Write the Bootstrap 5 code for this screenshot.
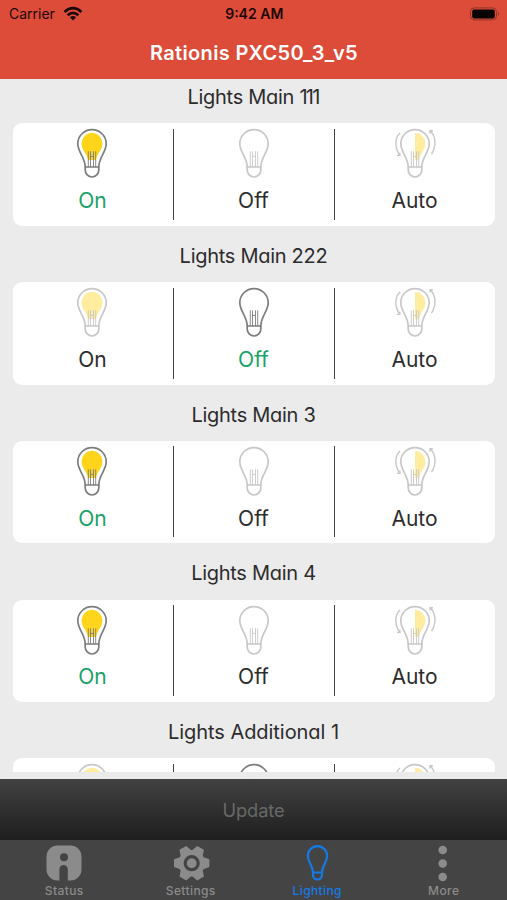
<!DOCTYPE html>
<html lang="en">
<head>
<meta charset="utf-8">
<meta name="viewport" content="width=device-width, initial-scale=1">
<title>Rationis PXC50_3_v5</title>
<link href="https://cdn.jsdelivr.net/npm/bootstrap@5.3.0/dist/css/bootstrap.min.css" rel="stylesheet">
<style>
body{font-family:Inter,"Liberation Sans",sans-serif;background:#ebebeb;color:#2c2c2c}
.top-area{background:#dd4c39;height:79px;flex:none}
.status-bar{height:27px;font-size:14px;line-height:27px;color:#1b0805;padding:0 7.5px 0 9px}
.page-title{font-size:20px;line-height:30px;margin-top:10.5px;padding-left:1px;font-weight:600;letter-spacing:.33px}
.light-list{height:693px;flex:none}
.light-name{height:36px;line-height:36px;font-size:20px;font-feature-settings:"cv11";margin-bottom:8.3px;font-weight:400;letter-spacing:-.28px}
.light-name.spaced{letter-spacing:-.05px}
.ones{letter-spacing:-1.8px;margin-right:1px}
.light-card{height:102.5px;border-radius:9px;margin:0 12.5px 12px;padding-top:5.5px;flex:none}
.choice{height:91px;border:0;background:none;color:inherit;padding:0;font-size:21px;line-height:26px;font-feature-settings:"cv11"}
.choice+.choice{border-left:1.3px solid #444}
.choice.picked{color:#17a266}
.choice svg{margin:-.6px 0 9.8px;opacity:.42;flex:none}
.choice:first-child svg{margin-right:1.4px}
.choice.picked svg{opacity:1}
.update-bar{height:61px;margin-top:7px;flex:none;background:linear-gradient(#424242,#1e1e1e);color:#686868;font-size:18.3px;line-height:27px;padding:1px 0 0;letter-spacing:-.1px;border:0}
.tab-bar{height:60px;flex:none;background:#444;font-size:12px;font-weight:500;letter-spacing:.4px;line-height:14px;color:#8b8b8b;padding-left:1px}
.tab-bar a{color:inherit;padding-top:5px}
.tab-bar a.current{color:#147be4}
.tab-bar svg{display:block;margin:0 auto 2px}
</style>
<script src="https://cdn.jsdelivr.net/npm/bootstrap@5.3.0/dist/js/bootstrap.bundle.min.js"></script>
</head>
<body class="vh-100 overflow-hidden d-flex flex-column">
<svg width="0" height="0" class="position-absolute" aria-hidden="true">
<defs>
<g id="bulb" fill="none" stroke="#7d7d7d" stroke-width="1.7" stroke-linejoin="round">
<path d="M17.2 39C17.2 29 9.8 24.5 9.8 15.8A14.2 14.2 0 0 1 38.2 15.8C38.2 24.5 30.800 29 30.800 39Z"/>
<path d="M17.2 39v3a6.8 7 0 0 0 13.6 0v-3"/>
<path stroke-width=".9" d="M20.300 39V23.300M22.500 23.300V39M25.500 39V23.300M27.700 23.300V39M22.500 28.400h3"/>
</g>
<path id="glow" fill="#ffd51c" d="M24 4.8A10.5 10.5 0 0 1 34.5 15.3C34.5 22 29.5 25 27.8 32H20.2C18.500 25 13.500 22 13.500 15.3A10.5 10.5 0 0 1 24 4.8Z"/>
<path id="half-glow" fill="#ffd51c" d="M24 4.8A10.5 10.5 0 0 1 34.5 15.3C34.5 22 29.5 25 27.8 32H24Z"/>
<g id="turns" fill="none" stroke="#7d7d7d" stroke-width="1.400">
<path d="M9 5C3.500 10 3.500 20 8.800 27.200M6 27.400h2.900V24.700M39.300 2.800c6 6 6 16 1.200 23.200M39 5.400V2.700h2.900"/>
</g>
</defs>
</svg>

<header class="top-area">
<div class="status-bar row g-0">
<div class="col d-flex align-items-center"><span>Carrier</span>
<svg class="ms-2" width="20" height="16" viewBox="0 0 20 16"><g fill="none" stroke="#1b0805" stroke-width="2.700"><path d="M1.500 5.900Q10 -1.500 18.500 5.900"/><path d="M4.600 9.200Q10 4.500 15.400 9.200"/></g><path fill="#1b0805" d="M6.900 11.300Q10 8.700 13.100 11.300L10 14.500Z"/></svg></div>
<div class="col-auto fw-semibold">9:42 AM</div>
<div class="col d-flex align-items-center justify-content-end"><svg width="32" height="14" viewBox="0 0 32 14"><rect x="2.500" y=".9" width="26" height="12" rx="3.800" fill="none" stroke="#8c3427"/><rect x="4.200" y="2.600" width="22.600" height="8.800" rx="2" fill="#080201"/><path d="M30 4.700q2 2.200 0 4.400z" fill="#8c3427"/></svg></div>
</div>
<h1 class="page-title text-white text-center mb-0">Rationis PXC50_3_v5</h1>
</header>

<main class="light-list overflow-hidden" id="lights"></main>

<button class="update-bar w-100">Update</button>
<nav class="tab-bar row g-0 text-center">
<a class="col text-decoration-none" href="#"><svg width="38" height="37" viewBox="0 0 38 37"><path fill="currentColor" fill-rule="evenodd" d="M12.500 .5h13a11 11 0 0 1 11 11v13a11 11 0 0 1-11 11h-2.700V24.300a4.200 4.200 0 0 0-8.400 0v11.200H12.500a11 11 0 0 1-11-11v-13a11 11 0 0 1 11-11ZM19 8.300a4 4 0 1 0 0 8 4 4 0 0 0 0-8Z"/></svg>Status</a>
<a class="col text-decoration-none" href="#"><svg width="38" height="37" viewBox="0 0 38 37"><g transform="translate(19.700 18.200)"><g fill="currentColor"><circle r="13.200"/><path id="tooth" d="M-6.200 -11L-3.900 -17.700H3.900L6.200 -11Z" transform="rotate(30)"/><use href="#tooth" transform="rotate(60)"/><use href="#tooth" transform="rotate(120)"/><use href="#tooth" transform="rotate(180)"/><use href="#tooth" transform="rotate(240)"/><use href="#tooth" transform="rotate(300)"/></g><circle r="6.500" fill="none" stroke="#444" stroke-width="3.200"/></g></svg>Settings</a>
<a class="col current text-decoration-none" href="#"><svg width="38" height="37" viewBox="0 0 38 37"><g fill="none" stroke="currentColor" stroke-width="2.200"><path d="M15 27.500C15 21 9.900 17.500 9.900 11A9.600 9.800 0 0 1 29.100 11C29.100 17.500 24 21 24 27.500Z"/><path d="M15 27.500v2.500a4.500 4.500 0 0 0 9 0v-2.500"/></g></svg>Lighting</a>
<a class="col text-decoration-none" href="#"><svg width="38" height="37" viewBox="0 0 38 37"><g fill="currentColor"><circle cx="17.700" cy="5" r="4.300"/><circle cx="17.700" cy="18.500" r="4.300"/><circle cx="17.700" cy="32" r="4.300"/></g></svg>More</a>
</nav>
<script>
const lights = [["Lights Main <span class='ones'>111</span>", 0], ["Lights Main 222", 1], ["Lights Main 3", 0], ["Lights Main 4", 0], ["Lights Additional 1", 1]];
const choices = [["On", ["glow", "bulb"]], ["Off", ["bulb"]], ["Auto", ["half-glow", "bulb", "turns"]]];
// Only the top edge of the last card is in view, so its labels are left out.
document.getElementById("lights").innerHTML = lights.map(([name, picked], row) => `
<h2 class="light-name text-center${row === 4 ? " spaced" : ""}">${name}</h2>
<div class="light-card bg-white"><div class="row g-0">${choices.map(([label, parts], i) => `
<button class="choice col d-flex flex-column align-items-center justify-content-start${i === picked ? " picked" : ""}"><svg width="48" height="50" viewBox="0 0 48 50">${parts.map(p => `<use href="#${p}"/>`).join("")}</svg>${row < 4 ? `<span>${label}</span>` : ""}</button>`).join("")}
</div></div>`).join("");
</script>
</body>
</html>
